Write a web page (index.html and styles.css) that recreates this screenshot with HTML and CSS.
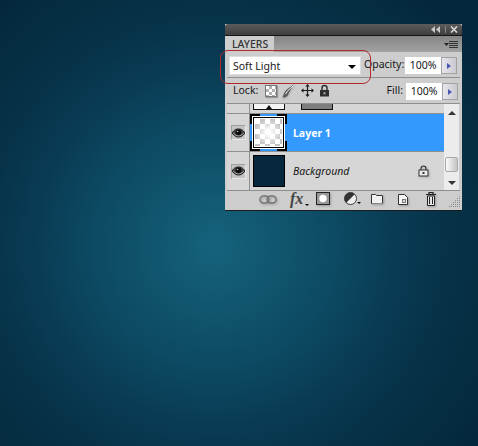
FILE: index.html
```html
<!DOCTYPE html>
<html lang="en">
<head>
<meta charset="utf-8">
<title>Layers</title>
<link rel="stylesheet" href="styles.css">
</head>
<body>
<section class="panel">
  <div class="annotation"></div>
  <header class="titlebar">
    <svg width="10" height="7" viewBox="0 0 10 7"><path d="M4 0v7L0 3.500zM9 0v7L5 3.500z" fill="#c8c8c8"/></svg>
    <span class="titlesep"></span>
    <svg width="8" height="7" viewBox="0 0 8 7"><path d="M1 .5l6 6M7 .5l-6 6" stroke="#d8d8d8" stroke-width="1.600" fill="none"/></svg>
  </header>
  <div class="tabs">
    <div class="tab">LAYERS</div>
    <svg class="menu" width="14" height="8" viewBox="0 0 14 8"><path d="M0 2h5L2.500 5z" fill="#222"/><path d="M5 .5h9M5 2.500h9M5 4.500h9M5 6.500h9" stroke="#333" stroke-width="1" fill="none"/></svg>
  </div>
  <div class="blendrow">
    <div class="select"><span>Soft Light</span><i class="caret"></i></div>
    <span class="lbl opacity">Opacity:</span>
    <div class="num">100%</div>
    <div class="stepper"><i></i></div>
  </div>
  <div class="lockrow">
    <span class="lbl locklbl">Lock:</span>
    <div class="lockicons">
      <i class="lockcheck"></i>
      <svg class="t-brush" width="14" height="15" viewBox="0 0 14 15"><path d="M13.500.5L6 5.500 3 8.500 .5 14.500c3.500 0 5.500-1.500 6-4L9 6z" fill="#5a5a5a"/><path d="M13 1.500L6 7.500 3.500 11" stroke="#f2f2f2" stroke-width="1" fill="none"/></svg>
      <svg width="13" height="13" viewBox="0 0 13 13"><path d="M6.500 0l2.200 2.500H7.100v3.400h3.400V4.300L13 6.500l-2.500 2.200V7.100H7.100v3.400h1.600L6.500 13l-2.200-2.500h1.600V7.100H2.500v1.600L0 6.500l2.500-2.200v1.600h3.400V2.500H4.300z" fill="#1c1c1c"/></svg>
      <svg width="11" height="13" viewBox="0 0 11 13"><path d="M3 6V4a2.500 2.500 0 015 0v2" stroke="#333" stroke-width="1.500" fill="none"/><rect x="1" y="6" width="9" height="6.500" fill="#2e2e2e"/><rect x="4.500" y="8" width="2" height="2.500" fill="#999"/></svg>
    </div>
    <span class="lbl fill">Fill:</span>
    <div class="num">100%</div>
    <div class="stepper"><i></i></div>
  </div>
  <div class="listwrap">
    <div class="list">
      <div class="row stub">
        <div class="eyecell"></div>
        <div class="stubthumbs"><div class="stubwhite"><i></i></div><div class="stubgrey"></div></div>
      </div>
      <div class="row layer selected">
        <div class="eyecell"><span class="eyebox"><svg width="13" height="10" viewBox="0 0 16 12"><use href="#eye"/></svg></span></div>
        <div class="cell">
          <div class="frame">
            <div class="checker"></div>
            <svg class="brackets" width="37" height="37" viewBox="0 0 37 37"><path d="M1 10V1h9M27 1h9v9M36 27v9h-9M10 36H1v-9" fill="none" stroke="#000" stroke-width="2"/></svg>
          </div>
          <span class="name">Layer 1</span>
        </div>
      </div>
      <div class="row layer last">
        <div class="eyecell"><span class="eyebox"><svg width="13" height="10" viewBox="0 0 16 12"><use href="#eye"/></svg></span></div>
        <div class="cell">
          <div class="dark"></div>
          <span class="name italic">Background</span>
          <svg class="rowlock" width="11" height="12" viewBox="0 0 11 12"><path d="M3 5V3.500a2.500 2.500 0 015 0V5" stroke="#333" stroke-width="1.200" fill="none"/><rect x="1" y="5" width="9" height="6" fill="#ececec" stroke="#333"/><rect x="4.500" y="7" width="2" height="2" fill="#333"/></svg>
        </div>
      </div>
    </div>
    <div class="scroll">
      <i class="up"></i>
      <div class="thumbbar"></div>
      <i class="down"></i>
    </div>
  </div>
  <footer class="tools">
    <svg class="t-chain" width="18" height="9" viewBox="0 0 18 9"><g fill="none" stroke="#777" stroke-width="1.500"><rect x="1" y="1" width="9" height="7" rx="3.500"/><rect x="8" y="1" width="9" height="7" rx="3.500"/></g></svg>
    <span class="fx">fx<i></i></span>
    <svg class="t-mask" width="14" height="13" viewBox="0 0 14 13"><rect x=".5" y=".5" width="13" height="12" fill="#999" stroke="#222"/><circle cx="7" cy="6.500" r="3.700" fill="#fff"/></svg>
    <span class="adj"><svg width="13" height="13" viewBox="0 0 14 14"><circle cx="7" cy="7" r="6.500" fill="#eee" stroke="#333"/><path d="M11.600 2.400A6.500 6.500 0 002.400 11.600z" fill="#333"/></svg><i></i></span>
    <svg class="t-folder" width="12" height="10" viewBox="0 0 12 10"><path d="M.5 9.500V.5h4l1 1h6v8z" fill="#f0f0f0" stroke="#333"/><path d="M1 9.500h11" stroke="#888"/></svg>
    <svg class="t-new" width="10" height="11" viewBox="0 0 10 11"><path d="M.5.500h6l3 3v7h-9z" fill="#f6f6f6" stroke="#333"/><path d="M4 5h4v4H4z" fill="#777"/><path d="M5 6h2v2H5z" fill="#ddd"/></svg>
    <svg class="t-trash" width="10" height="14" viewBox="0 0 10 14"><path d="M0 2.500h10M3 2V.5h4V2" stroke="#222" fill="none" stroke-width="1.200"/><path d="M1.500 4h7v9.500h-7z" fill="#e6e6e6" stroke="#222"/><path d="M3.500 5v7M6.500 5v7" stroke="#222"/></svg>
    <svg class="grip" width="11" height="11" viewBox="0 0 11 11"><path d="M10 0h1v1h-1zM8 2h1v1H8zM10 2h1v1h-1zM6 4h1v1H6zM8 4h1v1H8zM10 4h1v1h-1zM4 6h1v1H4zM6 6h1v1H6zM8 6h1v1H8zM10 6h1v1h-1zM2 8h1v1H2zM4 8h1v1H4zM6 8h1v1H6zM8 8h1v1H8zM10 8h1v1h-1zM0 10h1v1H0zM2 10h1v1H2zM4 10h1v1H4zM6 10h1v1H6zM8 10h1v1H8zM10 10h1v1h-1z" fill="#8a8a8a"/></svg>
  </footer>
</section>
<svg class="defs" width="0" height="0"><defs><g id="eye"><path d="M0 6C3 1.500 5.500 1 8 1s5 .5 8 5c-3 4-5.500 5-8 5s-5-1-8-5z" fill="#444" stroke="#111" stroke-width="1"/><path d="M1.500 6C4 8.800 6 9.500 8 9.500s4-.7 6.500-3.500" stroke="#ccc" fill="none"/><circle cx="8" cy="5.200" r="3.600" fill="#0c0c0c"/><circle cx="6.800" cy="4.200" r="1" fill="#bbb"/></g></defs></svg>
</body>
</html>
```
FILE: styles.css
```css
* { box-sizing: border-box; }
html, body { height: 100%; }
body {
  margin: 0;
  padding: 24px 0 0 225px;
  overflow: hidden;
  background: radial-gradient(circle 320px at 215px 245px, #15627c 0, #115670 60px, #0d4a63 120px, #093c54 180px, #063146 240px, #052b40 300px, #04273b 320px) #04273b;
  font-family: "Noto Sans", sans-serif;
  font-size: 10.5px;
  color: #161616;
}
.defs { position: absolute; }
.panel {
  position: relative;
  width: 237px;
  height: 187px;
  background: #cdcdcd;
  border-bottom: 1px solid #1c1c1c;
  display: flex;
  flex-direction: column;
}
.annotation {
  position: absolute;
  left: -5px;
  top: 26px;
  width: 151px;
  height: 34px;
  border: 1px solid #b3272d;
  border-radius: 8px;
  z-index: 2;
}
.titlebar {
  height: 12px;
  flex: none;
  background: linear-gradient(#5c5c5c, #3e3e3e);
  border-bottom: 1px solid #141414;
  border-radius: 3px 3px 0 0;
  display: flex;
  align-items: center;
  justify-content: flex-end;
  padding-right: 4px;
  gap: 4px;
}
.titlesep { width: 1px; height: 7px; background: #8a8a8a; }
.tabs {
  height: 16px;
  flex: none;
  background: linear-gradient(#858585, #a2a2a2);
  display: flex;
  justify-content: space-between;
  padding-right: 4px;
}
.tab {
  width: 49px;
  background: #cdcdcd;
  color: #333;
  font-weight: 500;
  padding-left: 7px;
  line-height: 16px;
}
.menu { margin-top: 5px; }
.blendrow, .lockrow {
  height: 26px;
  flex: none;
  margin: 0 2px;
  display: flex;
  align-items: flex-start;
  padding: 5px 2px 0 3px;
  border-bottom: 1px solid #8f8f8f;
}
.select {
  width: 130px;
  height: 17px;
  background: #fff;
  box-shadow: 0 0 0 1px #dedede;
  display: flex;
  align-items: center;
  justify-content: space-between;
  padding: 0 4px 0 3px;
}
.caret {
  border: 4px solid transparent;
  border-top: 4px solid #000;
  border-bottom: 0;
  margin-top: 2px;
}
.lbl { line-height: 15px; white-space: nowrap; }
.opacity { width: 45px; padding-left: 4px; }
.num {
  width: 36px;
  height: 17px;
  background: #fff;
  text-align: center;
  line-height: 17px;
  flex: none;
}
.stepper {
  width: 16px;
  height: 17px;
  flex: none;
  background: linear-gradient(90deg, #e6e6ec, #c9c9cf);
  border: 1px solid #a2a2a2;
  display: flex;
  align-items: center;
  justify-content: center;
}
.stepper i {
  border: 3px solid transparent;
  border-left: 4px solid #4a58b0;
  border-right: 0;
}
.locklbl { width: 32px; margin-left: 3px; }
.lockicons {
  display: flex;
  align-items: center;
  gap: 5px;
  flex: 1;
  height: 15px;
}
.lockcheck {
  width: 12px;
  height: 12px;
  border: 1px solid #777;
  background: repeating-conic-gradient(#b0b0b0 0 25%, #fff 0 50%) 0 0 / 6px 6px;
  box-shadow: 1px 1px 1px #999;
}
.t-brush { filter: drop-shadow(0 1px 1px #999); }
.fill { margin-right: 3px; }
.listwrap { height: 87px; flex: none; margin: 0 2px; display: flex; border-bottom: 1px solid #8f8f8f; }
.list { width: 217px; background: #d6d6d6; display: flex; flex-direction: column; }
.row { display: flex; border-bottom: 1px solid #8f8f8f; }
.stub { height: 10px; }
.layer { height: 38px; }
.last { border-bottom: 0; }
.eyecell {
  width: 23px;
  flex: none;
  border-right: 1px solid #8f8f8f;
  display: flex;
  align-items: center;
  justify-content: center;
}
.eyebox {
  width: 15px;
  height: 15px;
  border: 1px solid #a0a0a0;
  border-right-color: #e8e8e8;
  border-bottom-color: #e8e8e8;
  background: #c4c4c4;
  display: flex;
  align-items: center;
  justify-content: center;
}
.stubthumbs { display: flex; gap: 16px; padding-left: 3px; }
.stubwhite {
  width: 32px;
  height: 6px;
  background: #f4f4f4;
  border: 1px solid #111;
  border-top: 0;
  display: flex;
  justify-content: center;
  align-items: flex-end;
}
.stubwhite i {
  border: 3px solid transparent;
  border-bottom: 4px solid #111;
  border-top: 0;
}
.stubgrey { width: 32px; height: 6px; background: #7d7d7d; border: 1px solid #111; border-top: 0; }
.cell { flex: 1; display: flex; align-items: center; }
.selected .cell { background: #3399ff; }
.frame { position: relative; width: 37px; height: 37px; flex: none; margin-right: 6px; padding: 3px; }
.checker {
  width: 31px;
  height: 31px;
  border: 1px solid #000;
  box-shadow: 0 0 0 1px #fff inset, 0 0 0 1px #fff;
  background:
    radial-gradient(circle 14px at 50% 50%, #fff 10%, rgba(255,255,255,0) 100%),
    repeating-conic-gradient(#c2c2c2 0 25%, #fff 0 50%) 1px 1px / 10px 10px;
}
.brackets { position: absolute; left: 0; top: 0; }
.dark { width: 32px; height: 32px; flex: none; margin: 0 8px 0 3px; background: #07273d; border: 1px solid #000; }
.selected .name { color: #fff; font-weight: 700; }
.italic { font-style: italic; }
.rowlock { margin: 0 15px 0 auto; filter: drop-shadow(1px 1px 1px #aaa); }
.scroll {
  width: 15px;
  flex: none;
  display: flex;
  flex-direction: column;
  align-items: center;
  background: #ececec;
}
.up { border: 4px solid transparent; border-bottom: 4px solid #333; border-top: 0; margin-top: 7px; }
.down { border: 4px solid transparent; border-top: 4px solid #333; border-bottom: 0; margin-top: 9px; }
.thumbbar {
  width: 13px;
  height: 15px;
  margin-top: 42px;
  background: linear-gradient(90deg, #fafafa, #c4c4c4);
  border: 1px solid #a9a9a9;
  border-radius: 2px;
}
.tools {
  position: relative;
  height: 18px;
  flex: none;
  display: flex;
  align-items: flex-start;
  padding: 1px 0 0 34px;
}
.t-chain { margin-top: 3px; }
.t-folder { margin-top: 2px; }
.t-new { margin-top: 2px; }
.t-chain, .t-mask, .t-folder, .t-new, .t-trash { filter: drop-shadow(1px 1px 1px #999); }
.fx { margin: -1px 0 0 13px; width: 15px; font-family: "Liberation Serif", serif; font-style: italic; font-weight: 700; font-size: 16px; line-height: 16px; color: #444; position: relative; }
.fx i, .adj i { position: absolute; right: -4px; bottom: 1px; border: 2px solid transparent; border-top: 2px solid #000; border-bottom: 0; }
.t-mask { margin-left: 11px; }
.adj { position: relative; display: flex; margin-left: 14px; }
.t-folder { margin-left: 14px; }
.t-new { margin-left: 15px; }
.t-trash { margin-left: 18px; }
.grip { position: absolute; right: 2px; bottom: 2px; }
```
